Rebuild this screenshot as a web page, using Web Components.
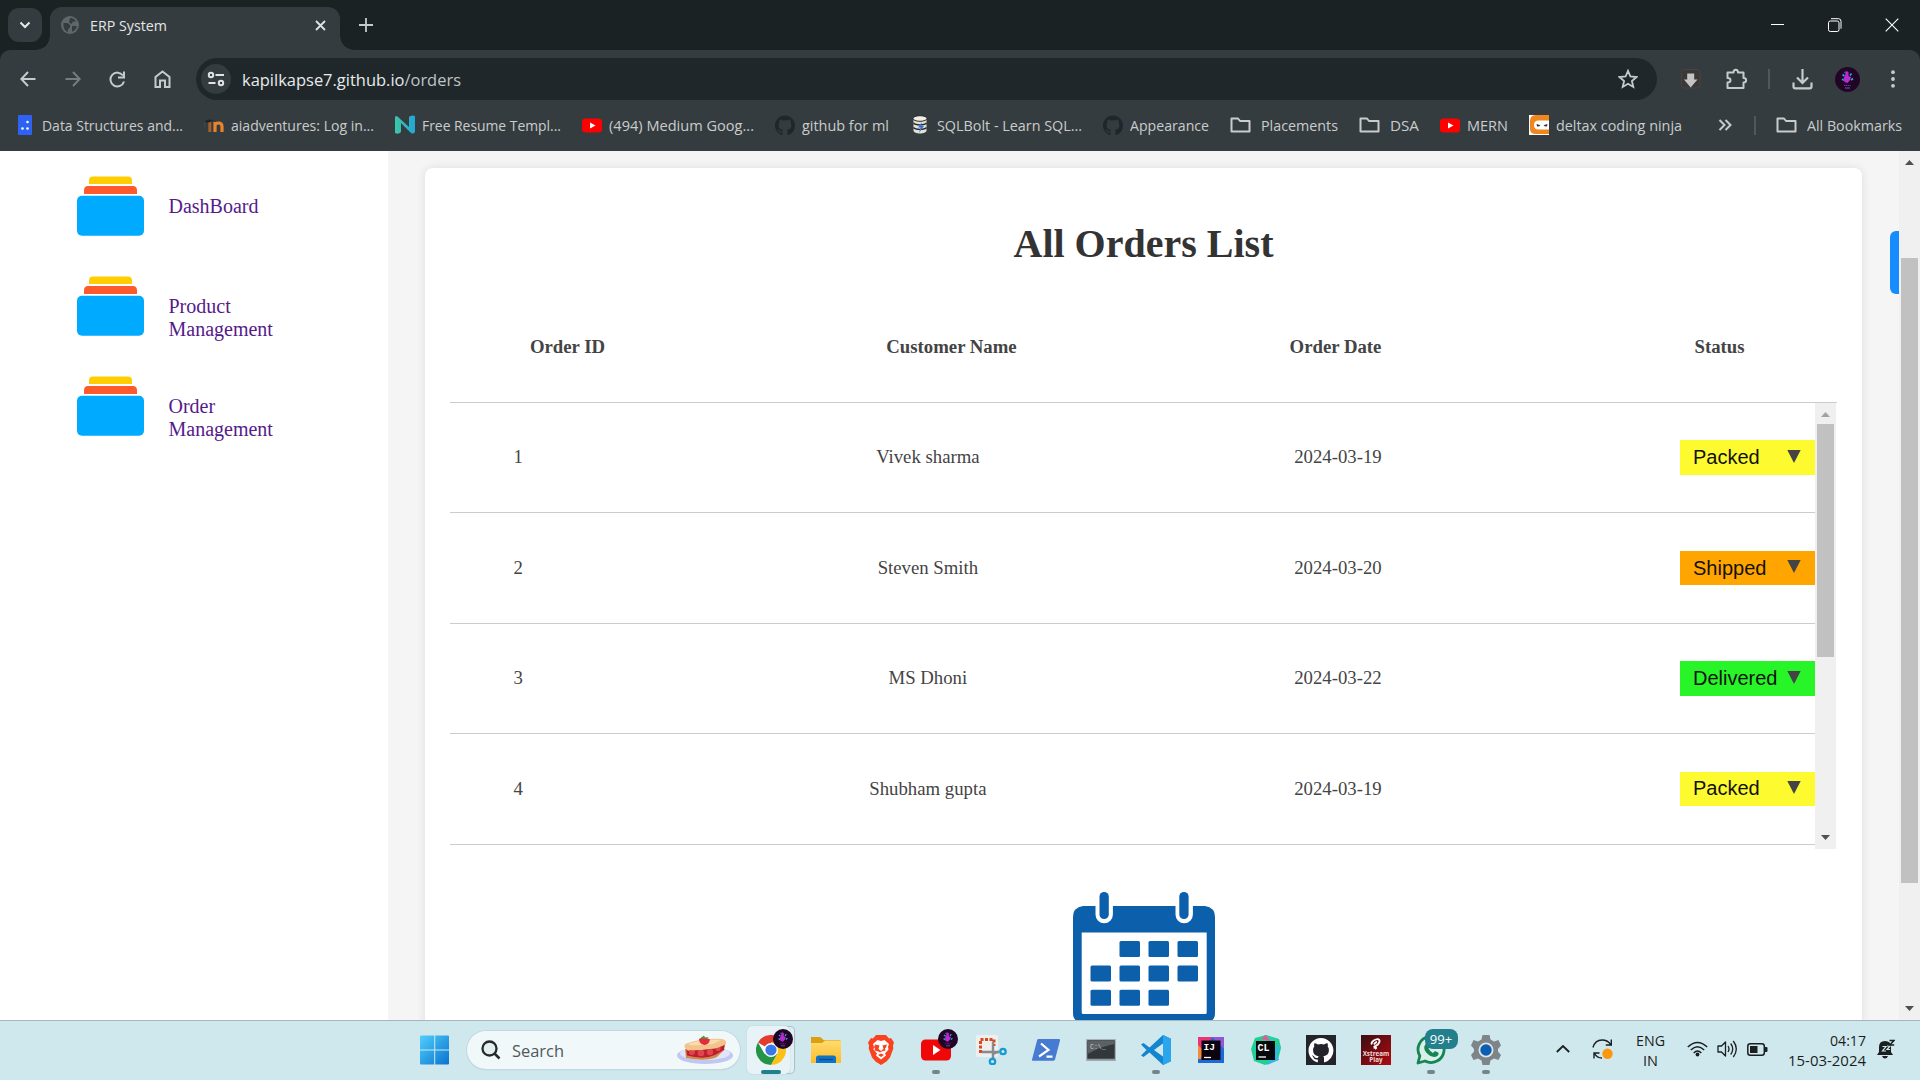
<!DOCTYPE html>
<html lang="en">
<head>
<meta charset="utf-8">
<title>ERP System</title>
<style>
html,body{margin:0;height:100%}
body{width:1920px;height:1080px;overflow:hidden;font-family:"Open Sans","Noto Sans",sans-serif}
</style>
</head>
<body>
<desktop-screen></desktop-screen>
<script>
const AVATAR = `<circle cx="12.5" cy="12.5" r="12.5" fill="#220526"/><path d="M11 4l2.500 1v4l2.500 1-1 3-2.500 3-3-1-1-4 1.500-2z" fill="#b92bd0"/><path d="M7.500 7.500l2 1.500M16.500 6.500l-1.500 2M7 12l1.800 1.500M18 11.500l-2 1.500M9.500 5.500h1" stroke="#29a9d8" stroke-width="1.600"/><path d="M9 18.500h7" stroke="#8d2cac" stroke-width="1" stroke-dasharray="1.200 .6"/><path d="M10 21h5" stroke="#4a6cb4" stroke-width="1"/>`;
const GITHUB = "M12 .5C5.400.5 0 5.900 0 12.500c0 5.300 3.400 9.800 8.200 11.400.6.1.8-.3.8-.6v-2.200c-3.300.7-4-1.400-4-1.400-.5-1.400-1.300-1.800-1.300-1.800-1.100-.7.1-.7.1-.7 1.200.1 1.800 1.200 1.800 1.200 1.100 1.800 2.800 1.300 3.500 1 .1-.8.4-1.300.8-1.600-2.700-.3-5.500-1.300-5.500-5.900 0-1.300.5-2.400 1.200-3.200-.1-.3-.5-1.500.1-3.200 0 0 1-.3 3.300 1.200a11.500 11.500 0 0 1 6 0c2.300-1.500 3.300-1.200 3.300-1.200.6 1.700.2 2.900.1 3.200.8.8 1.200 1.900 1.200 3.200 0 4.600-2.800 5.600-5.500 5.900.4.4.8 1.100.8 2.200v3.300c0 .3.2.7.8.6A12 12 0 0 0 24 12.500C24 5.900 18.600.5 12 .5z";
const YT = `<rect x="0" y="3.500" width="20" height="14" rx="3.500" fill="#f00"/><path d="M8 7.500l5.500 3-5.500 3z" fill="#fff"/>`;
const FOLDER = `<path d="M1.500 16.500V3.500h6.500l2 2.500h9.500v10.500z" fill="none" stroke="#c9cccd" stroke-width="2" stroke-linejoin="round"/>`;
const L = 'fill="none" stroke="#c7cacb" stroke-width="2"';
// name: [width, height, markup]
const ICONS = {
 chevron:[12,8,`<path d="M1.500 1.500L6 6l4.500-4.500" fill="none" stroke="#e6e9ea" stroke-width="2"/>`],
 globe:[18,18,`<circle cx="9" cy="9" r="9" fill="#61666b"/><path d="M2.500 7h4l2.500 2v2.500l-2 2v2.500C4 15 2 12 2.500 7zM9 2c3 0 5 1.500 6 3.500h-3L10.500 8 8 6.500zM11 10h4.800c-.3 3-2 4.600-4.800 5.700z" fill="#353c3f"/>`],
 x:[11,11,`<path d="M1 1l9 9M10 1l-9 9" fill="none" stroke="#dfe2e3" stroke-width="1.800"/>`],
 plus:[14,14,`<path d="M7 0v14M0 7h14" fill="none" stroke="#c7cacb" stroke-width="1.800"/>`],
 min:[14,14,`<path d="M0 6.500h13" stroke="#fff" stroke-width="1"/>`],
 max:[14,14,`<rect x=".5" y="3" width="10.500" height="10.500" rx="1.800" fill="none" stroke="#fff"/><path d="M3 .7h7.500a2.500 2.500 0 0 1 2.500 2.500v7.500" fill="none" stroke="#fff"/>`],
 close:[14,14,`<path d="M.7.700l12.600 12.600M13.300.700L.7 13.300" stroke="#fff" stroke-width="1.100"/>`],
 back:[16,16,`<path d="M15.500 8H1.500M8 1L1.300 8 8 15" ${L}/>`],
 fwd:[16,16,`<path d="M.5 8h14M8 1l6.700 7L8 15" fill="none" stroke="#767c7f" stroke-width="2"/>`],
 reload:[17,17,`<path d="M14 4.500A6.900 6.900 0 1 0 15 10.500" ${L}/><path d="M15 .5v6H9" ${L}/>`],
 home:[17,18,`<path d="M1.500 17V7L8.500 1.500 15.500 7v10H11v-6.500H6V17z" ${L}/>`],
 tune:[18,16,`<g fill="none" stroke="#dfe3e4" stroke-width="2"><circle cx="4" cy="4" r="2.200"/><path d="M8.500 4H17M1.500 12h7"/><circle cx="14" cy="12" r="2.200"/></g>`],
 star:[20,20,`<path d="M10 1.800l2.400 5.700 6.100.5-4.600 4 1.400 6-5.300-3.200L4.700 18l1.400-6L1.500 8l6.100-.5z" fill="none" stroke="#c7cacb" stroke-width="1.800"/>`],
 ext:[20,20,`<rect x=".5" y=".5" width="18.500" height="18.500" rx="3" fill="#3b3838" stroke="#484443"/><path d="M6.200 4.500h7v6h3.300l-6.800 8-6.800-8h3.300z" fill="#c4c4c4"/>`],
 puzzle:[22,22,`<path d="M1.500 4.500h6c0-3.800 4.500-3.800 4.500 0h5.500v5.500c3.500 0 3.500 4.500 0 4.500v5.500h-16v-5.500c4 0 4-4.500 0-4.500z" ${L} stroke-linejoin="round"/>`],
 download:[21,21,`<path d="M10.500 0v13M5 8.500l5.500 5.500L16 8.500M1.500 13.500v4q0 1.800 1.800 1.800h14.400q1.800 0 1.800-1.800v-4" fill="none" stroke="#c7cacb" stroke-width="2.200"/>`],
 avatar:[25,25,AVATAR],
 dots:[6,18,`<g fill="#c7cacb"><circle cx="3" cy="2.200" r="1.900"/><circle cx="3" cy="9" r="1.900"/><circle cx="3" cy="15.800" r="1.900"/></g>`],
 data:[20,20,`<rect x="3" y="0" width="14" height="20" rx="1" fill="#2d62f5"/><g fill="#fff"><circle cx="12.500" cy="7" r="1.300"/><circle cx="7.500" cy="13.500" r="1.300"/><circle cx="12.500" cy="13.500" r="1.300"/></g>`],
 moodle:[20,20,`<path d="M11 17V7M11 11q0-3 3.500-3t3.500 3.500V17" fill="none" stroke="#e8842c" stroke-width="3.200"/><path d="M5.800 7v10" stroke="#a3612d" stroke-width="3"/><path d="M0 7l4-2.500 6 .5-5 2.500z" fill="#29211f"/><path d="M.6 7v5" stroke="#4b4a49" stroke-width="1"/>`],
 novo:[20,20,`<defs><linearGradient id="n"><stop stop-color="#3cc6a6"/><stop offset="1" stop-color="#22a5d9"/></linearGradient></defs><path d="M0 3Q0 0 2.500 1.500L14 12V2q2-2.500 6-1v16q-1.500 2.500-4 1L6 8v9q-2.500 3-6 1z" fill="url(#n)"/>`],
 yt:[20,20,YT],
 ghb:[20,20,`<path transform="scale(.833)" d="${GITHUB}" fill="#20262a"/>`],
 sql:[20,20,`<path d="M3.500 3.500v12c0 4 13 4 13 0v-12z" fill="#e4e0d8"/><ellipse cx="10" cy="3.500" rx="7" ry="2.800" fill="#f2eee5" stroke="#24292b"/><path d="M3.500 8c2 2.500 11 2.500 13 0M3.500 12.500c2 2.500 11 2.500 13 0" stroke="#24292b" stroke-width="1.300" fill="none"/><path d="M12 7l-4 5.500h2.500L9 18l5-7h-3z" fill="#3574d6"/>`],
 folder:[21,20,FOLDER],
 delta:[20,20,`<path d="M0 0h20v20H0z" fill="#fff"/><path d="M20 0H7Q1 0 1 6v8q0 5 6 5h13v-4.500H9.500q-4.500 0-4.500-4.500t4.500-4.500H20z" fill="#f0861d"/><path d="M7.500 9l4 1.200q-2 1.800-3.500 1zM18.500 9l-4 1.200q2 1.800 3.500 1z" fill="#333"/>`],
 more:[14,12,`<path d="M1.500 1l5 5-5 5M7.500 1l5 5-5 5" ${L}/>`],
 nav:[67,60,`<path d="M12 8V4.500Q12 .5 16 .5h35q4 0 4 4V8z" fill="#ffcd00"/><path d="M7 18v-3.500Q7 10 11 10h45q4 0 4 4.500V18z" fill="#ff5a2c"/><rect y="19.700" width="67" height="40" rx="5" fill="#00aaff"/>`],
 calendar:[142,129,`<path d="M10 14H22.500v8.500a8.700 8.700 0 0 0 17.400 0V14h62.600v8.500a8.700 8.700 0 0 0 17.400 0V14H132q10 1.500 10 11v96q0 8-6 8H6q-6 0-6-8V25q0-9.500 10-11zM8.700 40.500v80q0 1.500 1.500 1.500h122q1.500 0 1.500-1.500v-80z" fill="#0c5faa" fill-rule="evenodd"/><g fill="#0c5faa"><rect x="26.500" y="0" width="9.300" height="27" rx="4.600"/><rect x="106.300" y="0" width="9.300" height="27" rx="4.600"/>${[[1,0],[2,0],[3,0],[0,1],[1,1],[2,1],[3,1],[0,2],[1,2],[2,2]].map(([c,r])=>`<rect x="${17.500+29*c}" y="${49+24.400*r}" width="20.500" height="16" rx="1.500"/>`).join('')}</g>`],
 up:[9,5,`<path d="M4.500 0L9 5H0z" fill="currentColor"/>`],
 down:[9,5,`<path d="M4.500 5L9 0H0z" fill="currentColor"/>`],
 win:[30,30,`<defs><linearGradient id="w" x2="1" y2="1"><stop stop-color="#4fd0fb"/><stop offset="1" stop-color="#0a72d0"/></linearGradient></defs><path d="M0 1.500Q0 .5 1 .5h13.200v14H0zM15.200.500H28q1 0 1 1v13H15.200zM0 15.500h14.200v14H1q-1 0-1-1zM15.200 15.500H29v13q0 1-1 1H15.200z" fill="url(#w)"/>`],
 search:[20,20,`<circle cx="8.500" cy="8.500" r="7" fill="#e3eef1" stroke="#252a2c" stroke-width="2.300"/><path d="M13.500 13.500l5 5" stroke="#252a2c" stroke-width="2.500"/>`],
 pie:[56,30,`<ellipse cx="28" cy="20.500" rx="28" ry="8.500" fill="#c0c7f0"/><ellipse cx="28" cy="18.500" rx="25" ry="6.500" fill="#e2e4fb"/><path d="M8 14l1 9q20 4 31-1l8-8z" fill="#d18a4c"/><path d="M9 12l1 8.500q17 4.500 28-.5l9-5 1-6-9 3z" fill="#bd1f2c"/><g fill="#e0454d"><circle cx="15" cy="17" r="3"/><circle cx="24" cy="18" r="3.300"/><circle cx="33" cy="17" r="3.200"/><circle cx="41" cy="13.500" r="2.600"/></g><path d="M8 13q-2-4 3-5 16-5 34-4 5 1 4 5-8 5-17 5-12 2-19 1-2 2-5-2z" fill="#f2c38a"/><path d="M12 8.500q15-4.500 32-3.500l-8 4q-14 2-24 1z" fill="#fadcae"/><path d="M22 4q5-3 11 .5-1 5-5.500 5.500Q22 9 22 4z" fill="#e32d3c"/><path d="M23 3.500l4-3 1 2 4-.5-3 2z" fill="#54913f"/>`],
 chrome:[30,30,`<circle cx="15" cy="15" r="15" fill="#fff"/><path d="M15 15L2 7.500A15 15 0 0 1 28 7.500H15z" fill="#e33b2e"/><path d="M2 7.500A15 15 0 0 0 15 30l6.500-11.300-6.500-3.700-6.500 3.700z" fill="#269447"/><path d="M28 7.500H15l6.500 11.200L15 30A15 15 0 0 0 28 7.500z" fill="#fbc116"/><circle cx="15" cy="15" r="7" fill="#fff"/><circle cx="15" cy="15" r="5.600" fill="#3b78e7"/>`],
 badge:[20,20,`<g transform="scale(.8)">${AVATAR}</g>`],
 files:[30,27,`<path d="M0 0h8.500q1 0 2 1l2 2H28q2 0 2 2v5H0z" fill="#dc9f10"/><defs><linearGradient id="f" y2="1" x2="0"><stop stop-color="#ffdc70"/><stop offset="1" stop-color="#fcbc26"/></linearGradient></defs><path d="M0 6h11l3-2.500h15q1 0 1 1V26H0z" fill="url(#f)"/><path d="M5 26v-5q0-2.500 2.500-2.500h15Q25 18.500 25 21v5z" fill="#0f72c4"/><path d="M8 22.500h14" stroke="#094e8c" stroke-width="1.300"/>`],
 brave:[26,30,`<path d="M8 0h10l3 3.500 2-.5 3 4.500-1 3 .3 3-3.300 9-3.500 4-5.500 3.500-5.500-3.500-3.500-4L.7 13.500l.3-3-1-3L3 3l2 .5z" fill="#f9421f"/><path d="M9.500 5L13 6l3.500-1 4.500 4-1 3 .5 2.500-3.500 4 1 2-5 4-5-4 1-2-3.500-4L6 12 5 9z" fill="#fff"/><path d="M7 9.500l4.500 1-1 3.500 2.500 2 2.500-2-1-3.500 4.500-1-1 3-1 1 .5 2-4 1-1.500 1-1.500-1-4-1 .5-2-1-1zM10 20l3-1.500 3 1.500-3 2z" fill="#f9421f"/>`],
 ytb:[30,30,`<rect y="4.500" width="30" height="21" rx="4.500" fill="#f00808"/><path d="M12 10l7.500 5-7.500 5z" fill="#fff"/>`],
 snip:[31,30,`<rect width="22" height="22" rx="2" fill="#f1eeee"/><path d="M4.500 18V4.500H18V11" fill="none" stroke="#d34c1d" stroke-width="3" stroke-dasharray="3 1.500"/><path d="M17 7v17M6 17h17" stroke="#858b8f" stroke-width="2.400"/><path d="M17 19l6-2.500" stroke="#858b8f" stroke-width="2"/><g fill="#d1e9ef" stroke="#169ad6" stroke-width="2.300"><circle cx="27" cy="16.500" r="2.700"/><circle cx="16.500" cy="26.500" r="2.700"/></g>`],
 ps:[28,22,`<path d="M6.500 0H27q1.500 0 1 1.500l-5 19q-.4 1.300-2 1.300H1q-1.300 0-.9-1.500l5-19Q5.400 0 6.500 0z" fill="#477ad1"/><path d="M9 4.500l7.500 6.500L7 17.500M14.500 17.700h6" fill="none" stroke="#fff" stroke-width="2.200"/>`],
 cmd:[30,22,`<rect x=".5" y=".5" width="29" height="21" rx="1" fill="#31373b" stroke="#a9b2b7" stroke-width="1.500"/><path d="M1.500 2h27v3Q16 7 1.500 15z" fill="#5b6164"/><text x="4" y="9.500" font-family="Liberation Mono,monospace" font-size="6.500" fill="#c9cdcf">C:\\_</text><path d="M1 20.500h28" stroke="#8d979c" stroke-width="1.600"/>`],
 vscode:[30,30,`<path d="M22 0l8 3.700v22.600L22 30 8.500 17.500 2.500 22 0 20.500 5.500 15 0 9.500 2.500 8l6 4.500zM22 8.500L13 15l9 6.500z" fill="#1486d0" fill-rule="evenodd"/><path d="M22 0l8 3.700v22.600L22 30z" fill="#2ba5ee"/>`],
 ij:[26,26,`<path d="M0 0h26v26H0z" fill="#1c69d8"/><path d="M0 0h15L4 12 0 20z" fill="#ef3275"/><path d="M0 8l6 6-3 8H0z" fill="#f68a35"/><path d="M14 0l12 0v12z" fill="#9357d5"/><rect x="3.500" y="3.500" width="19" height="19.500" fill="#0b0410"/><text x="5.500" y="13" font-family="Liberation Mono,monospace" font-weight="700" font-size="9.500" fill="#fff">IJ</text><path d="M6 20.500h7" stroke="#fff" stroke-width="1.300"/>`],
 cl:[30,30,`<path d="M4 3L15 0l13 4 2 9-3 12-13 5-11-4L0 14z" fill="#20cf92"/><path d="M13 0l13 4-2 10-12-7z" fill="#28cfa3"/><path d="M10 4l5-4 4 6z" fill="#e8559b"/><path d="M25 12l5-1-4 8 2 6-12 5z" fill="#2fb9e6"/><rect x="5" y="6" width="19" height="19" fill="#06090c"/><text x="6.500" y="15.500" font-family="Liberation Mono,monospace" font-weight="700" font-size="10" fill="#fff">CL</text><path d="M7.500 22h7.500" stroke="#fff" stroke-width="1.300"/>`],
 gh:[30,30,`<path d="M0 0h30v30H0z" fill="#24232a"/><path transform="translate(2.500 2.500) scale(1.040)" d="${GITHUB}" fill="#fff"/>`],
 airtel:[30,30,`<defs><linearGradient id="a" x2="1" y2="1"><stop stop-color="#3a0d10"/><stop offset="1" stop-color="#b00b12"/></linearGradient></defs><path d="M0 0h30v30H0z" fill="url(#a)"/><path d="M10.800 9.500q-1-2 2-4 4-2.500 5.500-.5 1 2-1.500 4.500-3 2.500-4 1.500M13 9.500q1.500-2.500 3-2.500M13 13.500q.5-1.500 2-1 .5 1-1 1.500" fill="none" stroke="#fff" stroke-width="1.800"/><text x="15" y="21" text-anchor="middle" font-family="Open Sans,sans-serif" font-weight="700" font-size="6.300" fill="#f5d9d9">Xstream</text><text x="15" y="27.300" text-anchor="middle" font-family="Open Sans,sans-serif" font-weight="700" font-size="6.300" fill="#f5d9d9">Play</text>`],
 wa:[30,30,`<path d="M2 28l1.800-7A13 13 0 1 1 9 26z" fill="#d9efe9" stroke="#178453" stroke-width="2.800" stroke-linejoin="round"/><path d="M10 8.500q2-1.500 3 .5l1 2.500-1.500 2q1.500 3 4.500 4.500l2-2 3.500 1.800q.5 3-3 4-5 .8-9.500-4.500-3.500-4.500 0-8.800z" fill="#178453"/>`],
 gear:[30,30,`<path d="M11.500 0h7l1 4.500 3.500 2L27.500 5 30 10.500 27 14v2.500l3 3.500-2.500 5-4.500-1.500-3.500 2-1 4.500h-7l-1-4.500-3.500-2L2.500 25 0 20l3-3.500V14l-3-3.500L2.500 5 7 6.500l3.500-2z" fill="#7e8589"/><circle cx="15" cy="15" r="7.500" fill="#dce5ea"/><circle cx="15" cy="15" r="5.700" fill="#0b5eb0"/>`],
 caret:[14,8,`<path d="M.8 7L7 1l6.200 6" fill="none" stroke="#1b1f20" stroke-width="1.800"/>`],
 sync:[21,22,`<path d="M1 9.500Q3 2 10 2q6 0 9 5M19.300 1.500V7h-5.500M2 20.500V15h5.500M2.500 15.500Q5 20 10 20" fill="none" stroke="#1b1f20" stroke-width="1.400"/><circle cx="15.500" cy="15.800" r="5.200" fill="#fb970a"/>`],
 wifi:[21,16,`<g fill="none" stroke="#1b1f20" stroke-width="1.500"><path d="M.8 6Q10.500-3 20.200 6M3.800 9Q10.500 2.500 17.200 9M6.700 12Q10.500 8 14.300 12"/></g><circle cx="10.500" cy="13.500" r="1.900" fill="#1b1f20"/>`],
 vol:[21,18,`<path d="M1 6h3.500L8.500 2v14l-4-4H1z" fill="none" stroke="#1b1f20" stroke-width="1.300" stroke-linejoin="round"/><path d="M11 6q2 3 0 6M13.700 3.500q4 5.500 0 11M16.300 1q6 8 0 16" fill="none" stroke="#1b1f20" stroke-width="1.300"/>`],
 batt:[21,13,`<rect x=".8" y=".8" width="16.500" height="11.400" rx="2.500" fill="none" stroke="#1b1f20" stroke-width="1.500"/><rect x="3" y="3" width="7.500" height="7" fill="#1b1f20"/><path d="M18 4h1.500q1 0 1 1v3q0 1-1 1H18z" fill="#1b1f20"/>`],
 bell:[18,20,`<path d="M8 2q6 0 6 6v5l2 3H0l2-3V8q0-6 6-6zM5 17h6q-1 2.500-3 2.500T5 17z" fill="#1b1f20"/><path d="M5.500 7.500h3.500l-3.500 4.500h3.500M10 7h3l-3 3.500h3" fill="none" stroke="#cfe8ee" stroke-width="1.200"/><path d="M12.500 1.500H17L12.800 6h4.400" fill="none" stroke="#1b1f20" stroke-width="1.500"/>`]
};
const define = (name, html, setup) => {
  const t = document.createElement('template');
  t.innerHTML = html;
  customElements.define(name, class extends HTMLElement {
    connectedCallback() {
      if (this.shadowRoot) return;
      this.attachShadow({mode: 'open'}).append(t.content.cloneNode(true));
      if (setup) setup(this, this.shadowRoot);
    }
  });
};
define('ui-icon', `<style>:host{display:block;flex:none}svg{display:block}</style>`, (el, root) => {
  const [w, h, body] = ICONS[el.getAttribute('name')];
  root.innerHTML += `<svg width="${w}" height="${h}" viewBox="0 0 ${w} ${h}">${body}</svg>`;
});
// A single line of text condensed or expanded to a given width.
define('fit-text', `<style>:host{display:block;flex:none;white-space:nowrap}span{display:inline-block;transform-origin:0 50%}</style><span><slot></slot></span>`, (el, root) => {
  const w = +el.getAttribute('w'), s = root.querySelector('span');
  el.style.width = w + 'px';
  s.style.transform = `scaleX(${w / s.getBoundingClientRect().width})`;
});
define('tab-strip', `<style>
:host{display:flex;height:50px;background:#1b2224;box-sizing:border-box;padding-left:8px;color:#e3e6e7}
.drop{width:34px;height:34px;margin:8px 8px 0 0;border-radius:11px;background:#353c3f;display:grid;place-items:center}
.tab{position:relative;width:290px;height:43px;margin-top:7px;background:#353c3f;border-radius:12px 12px 0 0;display:flex;align-items:center;box-sizing:border-box;padding:0 14px 7px 11px}
.tab::before,.tab::after{content:"";position:absolute;bottom:0;width:14px;height:14px}
.tab::before{left:-14px;background:radial-gradient(circle at 0 0,transparent 13.5px,#353c3f 14px)}
.tab::after{right:-14px;background:radial-gradient(circle at 100% 0,transparent 13.5px,#353c3f 14px)}
fit-text{font-size:14.500px;margin-left:11px}.x{margin-left:auto}.plus{margin:18px 0 0 19px}
.win{margin-left:auto;display:flex;gap:43px;padding:18px 21px 0 0}
</style><div class="drop"><ui-icon name="chevron"></ui-icon></div><div class="tab"><ui-icon name="globe"></ui-icon><fit-text w="77">ERP System</fit-text><ui-icon class="x" name="x"></ui-icon></div><ui-icon class="plus" name="plus"></ui-icon><div class="win"><ui-icon name="min"></ui-icon><ui-icon name="max"></ui-icon><ui-icon name="close"></ui-icon></div>`);
define('address-bar', `<style>
:host{display:block;background:#1b2224}
.bar{display:flex;height:58px;box-sizing:border-box;padding:8px 24px 8px 20px;background:#353c3f;border-radius:10px 10px 0 0;align-items:center}
.nav{display:flex;gap:29px;width:175.500px;align-items:center}
.box{width:1461px;height:42px;border-radius:21px;background:#20272a;display:flex;align-items:center;box-sizing:border-box;padding:0 19px 0 5px}
.info{width:30px;height:30px;border-radius:50%;background:#353c3f;display:grid;place-items:center;margin-right:11px}
fit-text{font-size:17px;color:#e8eaeb}i{font-style:normal;color:#bfc4c6}.star{margin-left:auto}
.e{margin-left:24px}.p{margin-left:25px}.s{width:2px;height:20px;background:#50585c;margin-left:20px}.d{margin-left:22.500px}.a{margin-left:22px}.m{margin-left:auto}
</style><div class="bar"><div class="nav"><ui-icon name="back"></ui-icon><ui-icon name="fwd"></ui-icon><ui-icon name="reload" style="margin-left:-1px"></ui-icon><ui-icon name="home" style="margin-left:-1px"></ui-icon></div>
<div class="box"><div class="info"><ui-icon name="tune"></ui-icon></div><fit-text w="219">kapilkapse7.github.io<i>/orders</i></fit-text><ui-icon class="star" name="star"></ui-icon></div>
<ui-icon class="e" name="ext"></ui-icon><ui-icon class="p" name="puzzle"></ui-icon><span class="s"></span><ui-icon class="d" name="download"></ui-icon><ui-icon class="a" name="avatar"></ui-icon><ui-icon class="m" name="dots"></ui-icon></div>`);
define('book-mark', `<style>:host{display:flex;align-items:center;gap:7px;flex:none;font-size:14.600px;color:#c9cccd}:host([icon=folder]){gap:10px}</style>`, (el, root) => {
  root.innerHTML += `<ui-icon name="${el.getAttribute('icon')}"></ui-icon><fit-text w="${el.getAttribute('w')}">${el.textContent}</fit-text>`;
});
define('bookmarks-bar', `<style>:host{display:flex;height:43px;box-sizing:border-box;padding:0 18px 9px 15px;background:#353c3f;gap:21px;align-items:center}
.more{margin-left:auto}.s{width:2px;height:19px;background:#50585c;margin:0 -1px 0 1px}
</style><book-mark icon="data" w="141">Data Structures and...</book-mark><book-mark icon="moodle" w="143">aiadventures: Log in...</book-mark><book-mark icon="novo" w="139">Free Resume Templ...</book-mark><book-mark icon="yt" w="145">(494) Medium Goog...</book-mark><book-mark icon="ghb" w="87">github for ml</book-mark><book-mark icon="sql" w="145">SQLBolt - Learn SQL...</book-mark><book-mark icon="ghb" w="79">Appearance</book-mark><book-mark icon="folder" w="77">Placements</book-mark><book-mark icon="folder" w="29">DSA</book-mark><book-mark icon="yt" w="41">MERN</book-mark><book-mark icon="delta" w="126">deltax coding ninja</book-mark><ui-icon class="more" name="more"></ui-icon><span class="s"></span><book-mark icon="folder" w="95">All Bookmarks</book-mark>`);
define('nav-link', `<style>:host{display:flex;height:100px;gap:24.500px}.t{padding-top:19px;width:140px;line-height:23px}</style><ui-icon name="nav"></ui-icon><div class="t"><slot></slot></div>`);
define('side-nav', `<style>:host{display:block;width:388px;background:#fff;box-sizing:border-box;padding:25px 0 0 77px;font:20px/23px "Liberation Serif",serif;color:#551a8b}</style><nav-link>DashBoard</nav-link><nav-link>Product<br>Management</nav-link><nav-link>Order<br>Management</nav-link>`);
define('scroll-bar', `<style>:host{display:flex;flex-direction:column;width:21px;flex:none;background:#f0f0f0;align-items:center;box-sizing:border-box;padding:9px 0;color:#505050}
.thumb{width:17px;background:#c1c1c1}.u{margin-bottom:7px}.d{margin-top:auto}:host([top]) .u{color:#a3a3a3}</style><ui-icon class="u" name="up"></ui-icon><div class="thumb"></div><ui-icon class="d" name="down"></ui-icon>`, (el, root) => {
  const th = root.querySelector('.thumb');
  th.style.height = el.getAttribute('length') + 'px';
  th.style.marginTop = (el.getAttribute('offset') || 0) + 'px';
});
define('status-select', `<style>:host{display:flex;width:135px;height:34.500px;box-sizing:border-box;padding:0 14px 0 13px;align-items:center;justify-content:space-between;font:20px "Liberation Sans",sans-serif;color:#111;background:#fdfb2f}
:host([state=Shipped]){background:#ffa500}:host([state=Delivered]){background:#28f528}svg{display:block;margin-top:-2.500px}</style><slot></slot><svg width="14" height="13"><path d="M.3 0h13.400L7 13z" fill="#444"/></svg>`);
define('order-row', `<style>:host{display:grid;grid-template-columns:272.500px 410px 410px 272.500px;height:110.400px;box-sizing:border-box;border-bottom:1px solid #ccc;align-items:center;text-align:center}
.id{padding-right:137px}span{position:relative;top:-.3px;left:.4px}status-select{justify-self:end;text-align:left}</style>`, (el, root) => {
  const [id, name, date, state] = el.textContent.split('|');
  root.innerHTML += `<span class="id">${id}</span><span>${name}</span><span>${date}</span><status-select state="${state}">${state}</status-select>`;
});
define('orders-card', `<style>:host{display:block;width:1437px;height:900px;box-sizing:border-box;margin:17px 0 0 37px;padding:0 25px;background:#fff;border-radius:8px;box-shadow:0 0 10px rgba(0,0,0,.1);font:18.750px/22px "Liberation Serif",serif;color:#444}
h1{margin:0;padding-top:53px;height:45px;line-height:45px;font-size:40px;text-align:center;color:#333}
.head{display:grid;grid-template-columns:309.500px 384px 384px 309.500px;font-weight:700;text-align:center;height:137px;box-sizing:border-box;padding-top:70px;border-bottom:1px solid #ccc}
.head :first-child{padding-right:74.500px}.head :last-child{padding-left:74.500px}
.list{display:flex;height:446px;width:1386px;overflow:hidden}.rows{width:1365px}
.cal{display:flex;justify-content:center;padding-top:43px}
</style><h1>All Orders List</h1><div class="head"><span>Order ID</span><span>Customer Name</span><span>Order Date</span><span>Status</span></div>
<div class="list"><div class="rows"><order-row>1|Vivek sharma|2024-03-19|Packed</order-row><order-row>2|Steven Smith|2024-03-20|Shipped</order-row><order-row>3|MS Dhoni|2024-03-22|Delivered</order-row><order-row>4|Shubham gupta|2024-03-19|Packed</order-row></div><scroll-bar top length="233"></scroll-bar></div>
<div class="cal"><ui-icon name="calendar"></ui-icon></div>`);
define('erp-page', `<style>:host{display:flex;height:869px;overflow:hidden;background:#f5f5f5}
.main{flex:1;overflow:hidden;display:flex;justify-content:space-between}.handle{width:9px;height:63px;margin-top:80px;border-radius:6px 0 0 6px;background:#178cff}</style><side-nav></side-nav><div class="main"><orders-card></orders-card><div class="handle"></div></div><scroll-bar length="625" offset="86"></scroll-bar>`);
define('task-app', `<style>:host{display:grid;position:relative;width:55px;height:60px;place-items:center;flex:none}
.dot{position:absolute;left:50%;bottom:6px;width:8px;height:4px;margin-left:-4px;border-radius:2px;background:#75858b}
:host([active])::before{content:"";position:absolute;left:3.500px;top:6px;width:43px;height:48px;border-radius:5px;background:#e7f3f6;box-shadow:0 0 1px #9fb5bc,5px 0 0 -1px #dfeff3,5px 0 1px #a9bec4}
:host([active]) .dot{width:20px;margin-left:-10px;background:#237f8c}
ui-icon{position:relative}.badge{position:absolute;left:29px;top:9px}
.count{position:absolute;left:21px;top:9px;width:33px;height:20px;border-radius:8px;background:#237f8c;color:#fff;font-size:13px;line-height:20px;text-align:center}</style>`, (el, root) => {
  const a = n => el.hasAttribute(n);
  root.innerHTML += `<ui-icon name="${el.getAttribute('icon')}"></ui-icon>${a('running') ? '<span class="dot"></span>' : ''}${a('badge') ? '<ui-icon class="badge" name="badge"></ui-icon>' : ''}${a('count') ? `<span class="count">${el.getAttribute('count')}</span>` : ''}`;
});
define('task-bar', `<style>:host{display:flex;height:60px;box-sizing:border-box;background:#cfe8ee;box-shadow:inset 0 1px #a3b7bd;align-items:center;padding-left:420px;color:#1b1f20;font-size:14.700px}
.search{width:273px;height:38px;box-sizing:border-box;margin-left:17px;border-radius:19px;background:#f0f8fa;box-shadow:0 0 0 1px #c4d9df,0 1px 1px #9fb3b9;display:flex;align-items:center;padding:0 7px 0 14px;color:#50585b;font-size:17px}
.search fit-text{margin-left:11px}.search ui-icon:last-child{margin-left:auto}.apps{display:flex;margin-left:3.500px}
.tray{display:flex;align-items:center;flex:1;padding:0 25px 2px 42px}.two{line-height:20px;margin-top:1px}
.two fit-text{margin:0 auto}.time fit-text{margin:0 0 0 auto}
</style><ui-icon name="win"></ui-icon><div class="search"><ui-icon name="search"></ui-icon><fit-text w="52">Search</fit-text><ui-icon name="pie"></ui-icon></div>
<div class="apps"><task-app icon="chrome" running active badge></task-app><task-app icon="files"></task-app><task-app icon="brave"></task-app><task-app icon="ytb" running badge></task-app><task-app icon="snip"></task-app><task-app icon="ps"></task-app><task-app icon="cmd"></task-app><task-app icon="vscode" running></task-app><task-app icon="ij"></task-app><task-app icon="cl"></task-app><task-app icon="gh"></task-app><task-app icon="airtel"></task-app><task-app icon="wa" running count="99+"></task-app><task-app icon="gear" running></task-app></div>
<div class="tray"><ui-icon name="caret"></ui-icon><ui-icon name="sync" style="margin-left:22.500px"></ui-icon><div class="two" style="margin-left:23px"><fit-text w="29">ENG</fit-text><fit-text w="15">IN</fit-text></div><ui-icon name="wifi" style="margin-left:22px"></ui-icon><ui-icon name="vol" style="margin-left:9px"></ui-icon><ui-icon name="batt" style="margin-left:9px"></ui-icon><div class="two time" style="margin-left:auto"><fit-text w="36">04:17</fit-text><fit-text w="78">15-03-2024</fit-text></div><ui-icon name="bell" style="margin-left:11px"></ui-icon></div>`);
define('desktop-screen', `<style>:host{display:flex;flex-direction:column;width:1920px;height:1080px;overflow:hidden}</style><tab-strip></tab-strip><address-bar></address-bar><bookmarks-bar></bookmarks-bar><erp-page></erp-page><task-bar></task-bar>`);
</script>
</body>
</html>
